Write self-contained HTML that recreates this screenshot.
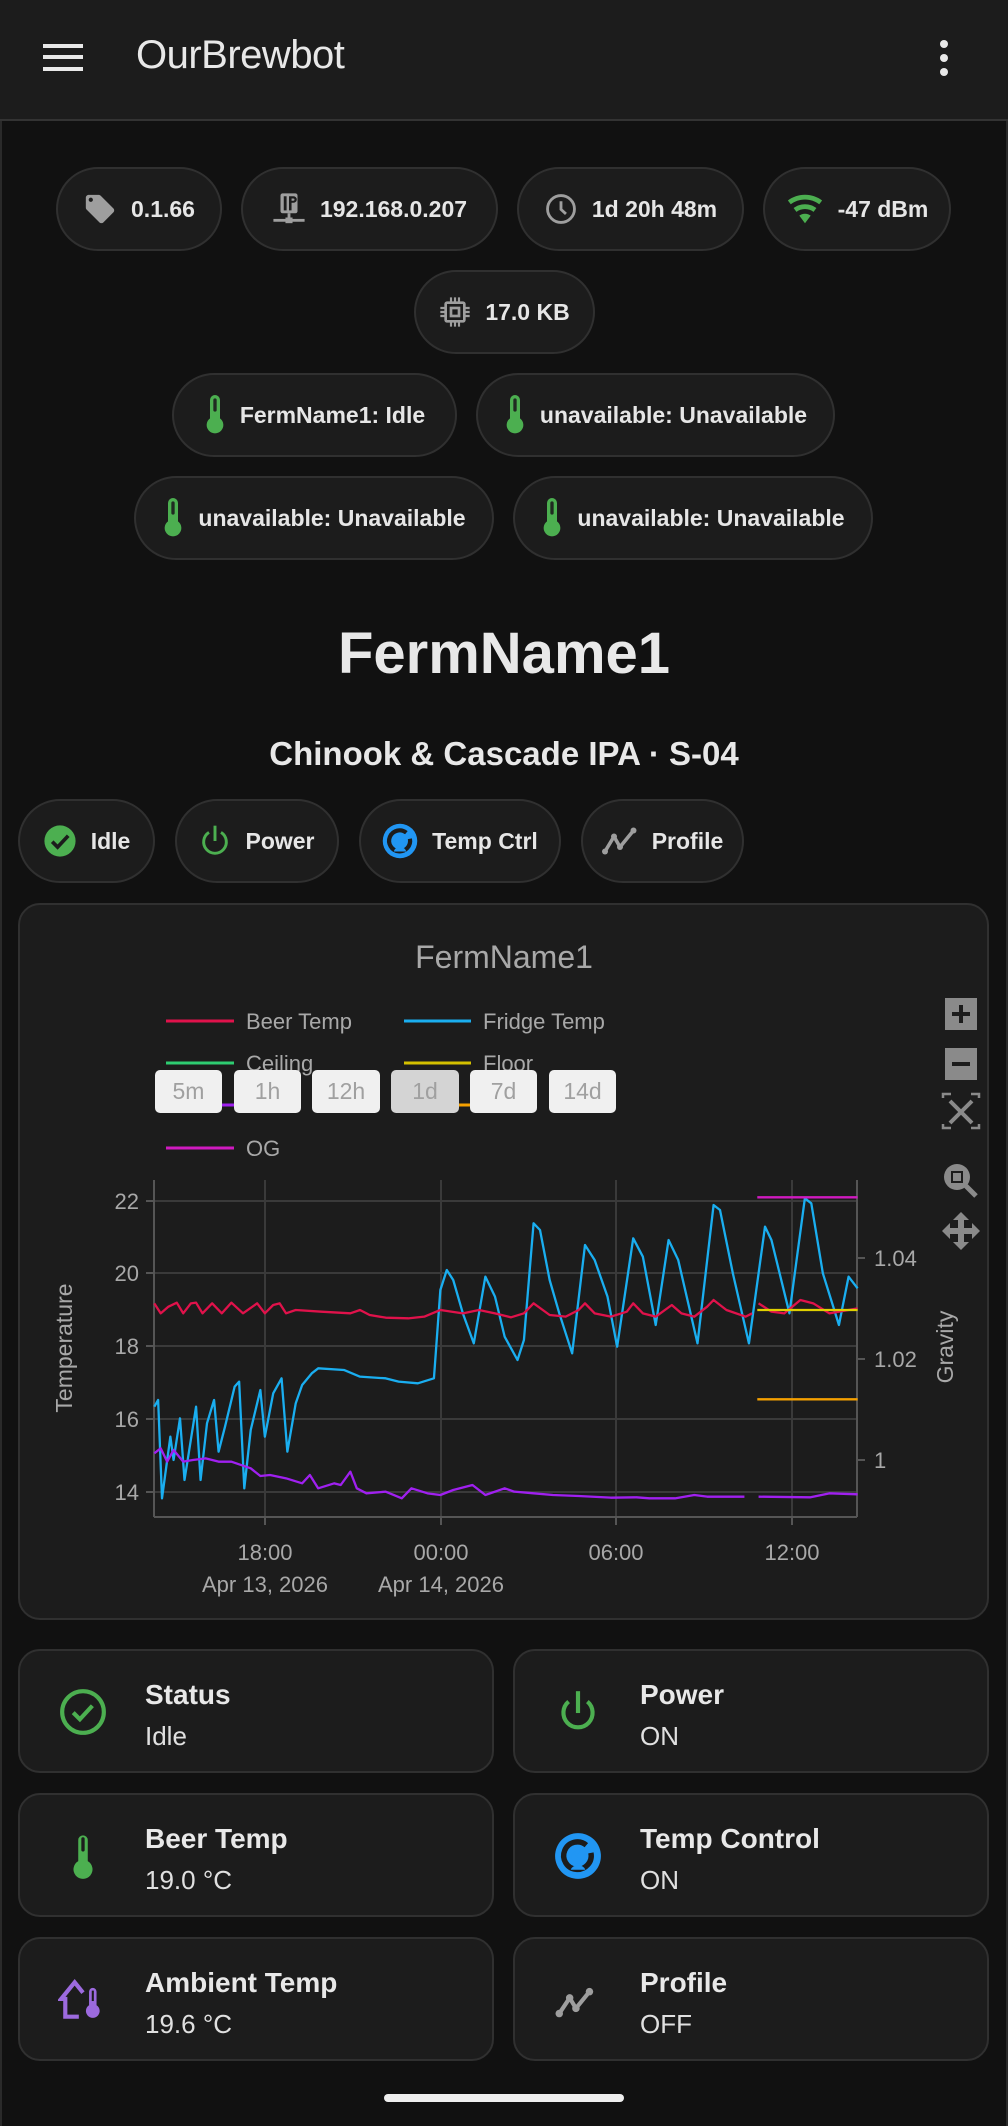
<!DOCTYPE html>
<html><head><meta charset="utf-8">
<style>
*{margin:0;padding:0;box-sizing:border-box}
html,body{width:1008px;height:2126px;background:#111111;overflow:hidden;font-family:"Liberation Sans",sans-serif;color:#e8e8e8}
.abs{position:absolute}
.hdr{left:0;top:0;width:1008px;height:121px;background:#1c1c1c;border-bottom:2px solid #333}
.chip{position:absolute;height:84px;border:2px solid #303030;background:#1c1c1c;border-radius:42px;display:flex;align-items:center;justify-content:center;gap:14px;font-weight:bold;font-size:23px;color:#e6e6e6;white-space:nowrap}
.chip svg{flex:none}
.card{position:absolute;border:2px solid #303030;background:#1c1c1c;border-radius:22px}
.tile .t{position:absolute;left:125px;top:28px;font-size:28px;font-weight:bold;color:#e8e8e8;white-space:nowrap}
.tile .v{position:absolute;left:125px;top:70px;font-size:26px;color:#e0e0e0}
.tile svg{position:absolute;left:38px;top:36px}
.rb{position:absolute;top:1070px;height:43px;background:#f0f0f0;border-radius:5px;color:#a0a0a0;font-size:23px;display:flex;align-items:center;justify-content:center}
</style></head><body>
<div class="abs" style="left:0;top:0;width:2px;height:2126px;background:#2a2a2a"></div>
<div class="abs" style="right:0;top:0;width:2px;height:2126px;background:#2a2a2a"></div>
<div class="abs hdr">
  <div class="abs" style="left:43px;top:44px;width:40px;height:4px;background:#e8e8e8"></div>
  <div class="abs" style="left:43px;top:55px;width:40px;height:4px;background:#e8e8e8"></div>
  <div class="abs" style="left:43px;top:67px;width:40px;height:4px;background:#e8e8e8"></div>
  <div class="abs" style="left:136px;top:33px;font-size:40px;color:#e8e8e8;letter-spacing:-0.5px">OurBrewbot</div>
  <div class="abs" style="left:940px;top:40px;width:8px;height:8px;border-radius:4px;background:#e8e8e8"></div>
  <div class="abs" style="left:940px;top:54px;width:8px;height:8px;border-radius:4px;background:#e8e8e8"></div>
  <div class="abs" style="left:940px;top:68px;width:8px;height:8px;border-radius:4px;background:#e8e8e8"></div>
</div>

<!-- chips row 1 -->
<div class="chip" style="left:56px;top:167px;width:166px">
<svg width="34" height="34" viewBox="0 0 24 24"><path fill="#9e9e9e" d="M5.5,7A1.5,1.5 0 0,1 4,5.5A1.5,1.5 0 0,1 5.5,4A1.5,1.5 0 0,1 7,5.5A1.5,1.5 0 0,1 5.5,7M21.41,11.58L12.41,2.58C12.05,2.22 11.55,2 11,2H4C2.89,2 2,2.89 2,4V11C2,11.550 2.22,12.05 2.59,12.41L11.58,21.41C11.95,21.77 12.45,22 13,22C13.55,22 14.05,21.77 14.41,21.41L21.41,14.41C21.78,14.05 22,13.55 22,13C22,12.44 21.77,11.94 21.41,11.58Z"/></svg>0.1.66</div>
<div class="chip" style="left:241px;top:167px;width:257px">
<svg width="34" height="34" viewBox="0 0 24 24"><rect x="6" y="1" width="12" height="14" rx="1.5" fill="#9e9e9e"/><rect x="8.3" y="3" width="2" height="10" fill="#1c1c1c"/><path d="M12 3h3.2a2.2 2.2 0 0 1 0 4.6H13.8V13H12Z M13.8 4.6v1.6h1.3a0.8 0.8 0 0 0 0-1.6Z" fill="#1c1c1c" fill-rule="evenodd"/><rect x="11" y="15" width="2" height="4" fill="#9e9e9e"/><rect x="1" y="19" width="22" height="2" fill="#9e9e9e"/><rect x="9.5" y="18" width="5" height="4" fill="#9e9e9e"/></svg>192.168.0.207</div>
<div class="chip" style="left:517px;top:167px;width:227px">
<svg width="34" height="34" viewBox="0 0 24 24"><circle cx="12" cy="12" r="9.5" fill="none" stroke="#9e9e9e" stroke-width="2"/><path d="M12 6.5V12.3L15.5 15.5" fill="none" stroke="#9e9e9e" stroke-width="2"/></svg>1d 20h 48m</div>
<div class="chip" style="left:763px;top:167px;width:188px">
<svg width="38" height="38" viewBox="0 0 24 24"><path fill="#4caf50" d="M12,21L15.6,16.2C14.6,15.45 13.35,15 12,15C10.65,15 9.4,15.45 8.4,16.2L12,21M12,3C7.95,3 4.21,4.34 1.2,6.6L3,9C5.5,7.12 8.62,6 12,6C15.38,6 18.5,7.12 21,9L22.8,6.6C19.79,4.34 16.05,3 12,3M12,9C9.3,9 6.81,9.89 4.8,11.4L6.6,13.8C8.1,12.67 9.97,12 12,12C14.03,12 15.9,12.67 17.4,13.8L19.2,11.4C17.19,9.890 14.7,9 12,9Z"/></svg>-47 dBm</div>
<div class="chip" style="left:414px;top:270px;width:181px">
<svg width="32" height="32" viewBox="0 0 24 24"><rect x="5" y="5" width="14" height="14" rx="1" fill="none" stroke="#9e9e9e" stroke-width="2"/><rect x="9" y="9" width="6" height="6" fill="none" stroke="#9e9e9e" stroke-width="2"/><path d="M9 1v4M12 1v4M15 1v4M9 19v4M12 19v4M15 19v4M1 9h4M1 12h4M1 15h4M19 9h4M19 12h4M19 15h4" stroke="#9e9e9e" stroke-width="1.6"/></svg>17.0 KB</div>

<!-- thermo chips -->
<div class="chip" style="left:172px;top:373px;width:285px"><svg width="22" height="40" viewBox="0 0 12 24"><path fill="#4caf50" d="M9 14V3a3 3 0 0 0-6 0v11a5 5 0 1 0 6 0Z"/><rect x="5" y="2" width="2" height="8" rx="1" fill="#1c1c1c" opacity="0.9"/></svg>FermName1: Idle</div>
<div class="chip" style="left:476px;top:373px;width:359px"><svg width="22" height="40" viewBox="0 0 12 24"><path fill="#4caf50" d="M9 14V3a3 3 0 0 0-6 0v11a5 5 0 1 0 6 0Z"/><rect x="5" y="2" width="2" height="8" rx="1" fill="#1c1c1c" opacity="0.9"/></svg>unavailable: Unavailable</div>
<div class="chip" style="left:134px;top:476px;width:360px"><svg width="22" height="40" viewBox="0 0 12 24"><path fill="#4caf50" d="M9 14V3a3 3 0 0 0-6 0v11a5 5 0 1 0 6 0Z"/><rect x="5" y="2" width="2" height="8" rx="1" fill="#1c1c1c" opacity="0.9"/></svg>unavailable: Unavailable</div>
<div class="chip" style="left:513px;top:476px;width:360px"><svg width="22" height="40" viewBox="0 0 12 24"><path fill="#4caf50" d="M9 14V3a3 3 0 0 0-6 0v11a5 5 0 1 0 6 0Z"/><rect x="5" y="2" width="2" height="8" rx="1" fill="#1c1c1c" opacity="0.9"/></svg>unavailable: Unavailable</div>

<div class="abs" style="left:0;width:1008px;top:620px;text-align:center;font-size:58px;font-weight:bold;color:#e8e8e8">FermName1</div>
<div class="abs" style="left:0;width:1008px;top:735px;text-align:center;font-size:33px;font-weight:bold;color:#e8e8e8">Chinook &amp; Cascade IPA · S-04</div>

<!-- action buttons -->
<div class="chip" style="left:18px;top:799px;width:137px;height:84px;font-size:23px"><svg width="34" height="34" viewBox="0 0 24 24"><circle cx="12" cy="12" r="11" fill="#4caf50"/><path d="M6.5 12.5l3.8 3.8 7.5-8" fill="none" stroke="#1c1c1c" stroke-width="2.6"/></svg>Idle</div>
<div class="chip" style="left:175px;top:799px;width:164px;height:84px"><svg width="32" height="36" viewBox="0 0 24 26"><path d="M7.5 6.5A8.5 8.5 0 1 0 16.5 6.5" fill="none" stroke="#4caf50" stroke-width="2.2"/><path d="M12 1.5V13" stroke="#4caf50" stroke-width="2.2"/></svg>Power</div>
<div class="chip" style="left:359px;top:799px;width:202px;height:84px"><svg width="36" height="36" viewBox="0 0 24 24"><circle cx="12" cy="12" r="11.5" fill="#2196f3"/><path d="M16.2 6.5A7 7 0 1 0 18.6 10.5" fill="none" stroke="#1c1c1c" stroke-width="2.8"/><circle cx="12" cy="12.5" r="3.2" fill="#2196f3"/><path d="M12 13L16 8" stroke="#2196f3" stroke-width="2.5"/><path d="M8 19a4 3 0 0 1 8 0" fill="#2196f3"/></svg>Temp Ctrl</div>
<div class="chip" style="left:581px;top:799px;width:163px;height:84px"><svg width="36" height="30" viewBox="0 0 24 20"><path d="M2 17L8 7L12 14L21 3" fill="none" stroke="#9e9e9e" stroke-width="2.4" stroke-linejoin="round"/><circle cx="2" cy="17" r="2" fill="#9e9e9e"/><circle cx="8" cy="7" r="2" fill="#9e9e9e"/><circle cx="12" cy="14" r="2" fill="#9e9e9e"/><circle cx="21" cy="3" r="2" fill="#9e9e9e"/></svg>Profile</div>

<!-- chart card -->
<div class="card" style="left:18px;top:903px;width:971px;height:717px"></div>
<svg class="abs" style="left:0;top:0" width="1008" height="2126" viewBox="0 0 1008 2126">
 <text x="504" y="968" text-anchor="middle" font-family="Liberation Sans" font-size="32" fill="#a8a8a8">FermName1</text>
 <g font-family="Liberation Sans" font-size="22" fill="#a8a8a8">
  <line x1="166" y1="1021" x2="234" y2="1021" stroke="#e0124b" stroke-width="3"/><text x="246" y="1029">Beer Temp</text>
  <line x1="404" y1="1021" x2="471" y2="1021" stroke="#1aaef0" stroke-width="3"/><text x="483" y="1029">Fridge Temp</text>
  <line x1="166" y1="1063" x2="234" y2="1063" stroke="#2ecc71" stroke-width="3"/><text x="246" y="1071">Ceiling</text>
  <line x1="404" y1="1063" x2="471" y2="1063" stroke="#d4c000" stroke-width="3"/><text x="483" y="1071">Floor</text>
  <line x1="166" y1="1105" x2="234" y2="1105" stroke="#a020f0" stroke-width="3"/><text x="246" y="1113">SG</text>
  <line x1="404" y1="1105" x2="471" y2="1105" stroke="#f5a000" stroke-width="3"/><text x="483" y="1113">FG</text>
  <line x1="166" y1="1148" x2="234" y2="1148" stroke="#d01ac0" stroke-width="3"/><text x="246" y="1156">OG</text>
 </g>
 <g stroke="#3a3a3a" stroke-width="2">
  <line x1="154" y1="1201" x2="857" y2="1201"/><line x1="154" y1="1273" x2="857" y2="1273"/>
  <line x1="154" y1="1346" x2="857" y2="1346"/><line x1="154" y1="1419" x2="857" y2="1419"/>
  <line x1="154" y1="1492" x2="857" y2="1492"/>
  <line x1="265" y1="1180" x2="265" y2="1517"/><line x1="441" y1="1180" x2="441" y2="1517"/>
  <line x1="616" y1="1180" x2="616" y2="1517"/><line x1="792" y1="1180" x2="792" y2="1517"/>
 </g>
 <g stroke="#555" stroke-width="2">
  <line x1="154" y1="1180" x2="154" y2="1517"/><line x1="857" y1="1180" x2="857" y2="1517"/>
  <line x1="154" y1="1517" x2="857" y2="1517"/>
  <line x1="265" y1="1517" x2="265" y2="1525"/><line x1="441" y1="1517" x2="441" y2="1525"/><line x1="616" y1="1517" x2="616" y2="1525"/><line x1="792" y1="1517" x2="792" y2="1525"/>
  <line x1="146" y1="1201" x2="154" y2="1201"/><line x1="146" y1="1273" x2="154" y2="1273"/><line x1="146" y1="1346" x2="154" y2="1346"/><line x1="146" y1="1419" x2="154" y2="1419"/><line x1="146" y1="1492" x2="154" y2="1492"/>
  <line x1="857" y1="1258" x2="865" y2="1258"/><line x1="857" y1="1359" x2="865" y2="1359"/><line x1="857" y1="1460" x2="865" y2="1460"/>
 </g>
 <g font-family="Liberation Sans" font-size="22" fill="#a8a8a8">
  <text x="139" y="1209" text-anchor="end">22</text><text x="139" y="1281" text-anchor="end">20</text>
  <text x="139" y="1354" text-anchor="end">18</text><text x="139" y="1427" text-anchor="end">16</text>
  <text x="139" y="1500" text-anchor="end">14</text>
  <text x="874" y="1266">1.04</text><text x="874" y="1367">1.02</text><text x="874" y="1468">1</text>
  <text x="265" y="1560" text-anchor="middle">18:00</text><text x="441" y="1560" text-anchor="middle">00:00</text>
  <text x="616" y="1560" text-anchor="middle">06:00</text><text x="792" y="1560" text-anchor="middle">12:00</text>
  <text x="265" y="1592" text-anchor="middle">Apr 13, 2026</text><text x="441" y="1592" text-anchor="middle">Apr 14, 2026</text>
  <text transform="translate(72,1348) rotate(-90)" text-anchor="middle" font-size="23">Temperature</text>
  <text transform="translate(953,1347) rotate(-90)" text-anchor="middle" font-size="23">Gravity</text>
 </g>
 <g transform="matrix(0.64286,0,0,0.33333,0,1140)" fill="none" stroke-width="2.3" stroke-linejoin="round">
  <polyline vector-effect="non-scaling-stroke" stroke="#1aaef0" points="240,800 246,780 252,1075 265,890 270,960 280,835 287,1020 305,800 312,1020 322,850 333,780 340,935 350,860 365,740 372,725 380,1045 390,870 405,750 412,890 425,760 438,715 447,935 460,790 470,735 485,700 495,685 535,690 560,710 600,715 620,725 650,730 675,715 685,450 695,390 705,420 720,520 737,610 755,410 770,470 785,590 805,660 815,600 830,250 840,270 855,420 870,520 890,640 910,315 925,360 945,470 960,620 985,295 1000,350 1020,555 1040,300 1055,360 1085,610 1110,195 1120,210 1140,400 1165,610 1190,260 1200,300 1228,520 1252,175 1262,190 1280,400 1305,555 1320,410 1334,445"/>
  <polyline vector-effect="non-scaling-stroke" stroke="#e0124b" points="240,490 250,520 262,500 275,488 285,520 297,490 305,488 315,520 330,490 345,520 360,488 378,520 400,490 412,520 425,495 435,490 445,520 460,510 500,515 545,520 560,510 575,525 600,533 635,535 660,530 685,510 720,520 745,510 770,520 795,532 815,520 830,490 855,525 880,530 900,510 910,490 925,520 950,530 975,515 985,490 1000,520 1020,530 1045,495 1060,520 1080,530 1100,500 1110,480 1130,510 1160,530 1170,520"/>
  <polyline vector-effect="non-scaling-stroke" stroke="#e0124b" points="1180,490 1200,515 1220,520 1245,480 1265,490 1290,520 1334,505"/>
  <polyline vector-effect="non-scaling-stroke" stroke="#a020f0" points="240,940 250,925 260,965 270,930 285,965 300,960 320,955 340,965 360,965 390,985 405,1008 420,1005 445,1015 470,1030 482,1005 495,1045 520,1030 530,1035 545,995 555,1045 570,1060 600,1055 625,1075 640,1045 665,1060 685,1065 705,1050 735,1035 755,1065 785,1045 800,1055 830,1060 860,1065 900,1068 950,1073 990,1072 1010,1075 1050,1075 1080,1065 1100,1070 1158,1070"/>
  <polyline vector-effect="non-scaling-stroke" stroke="#a020f0" points="1180,1070 1260,1072 1290,1060 1334,1063"/>
  <line vector-effect="non-scaling-stroke" x1="1178" y1="172" x2="1334" y2="172" stroke="#d01ac0"/>
  <line vector-effect="non-scaling-stroke" x1="1178" y1="510" x2="1334" y2="510" stroke="#e0d000"/>
  <line vector-effect="non-scaling-stroke" x1="1178" y1="778" x2="1334" y2="778" stroke="#f5a000"/>
 </g>
 <g fill="#8a8a8a">
  <rect x="945" y="998" width="32" height="32"/><rect x="952" y="1012" width="18" height="4" fill="#1c1c1c"/><rect x="959" y="1005" width="4" height="18" fill="#1c1c1c"/>
  <rect x="945" y="1048" width="32" height="32"/><rect x="952" y="1062" width="18" height="4" fill="#1c1c1c"/>
  <path d="M943 1098v-4h8M971 1094h8v4M979 1124v4h-8M951 1128h-8v-4" fill="none" stroke="#8a8a8a" stroke-width="2.5"/>
  <path d="M950 1101l22 22M972 1101l-22 22" stroke="#8a8a8a" stroke-width="4"/>
  <circle cx="957" cy="1177" r="13"/><rect x="951" y="1171" width="12" height="12" fill="#1c1c1c"/><rect x="953" y="1173" width="8" height="8"/><path d="M966 1186l10 10" stroke="#8a8a8a" stroke-width="5"/>
  <path d="M961 1212l8 8h-5v8h8v-5l8 8-8 8v-5h-8v8h5l-8 8-8-8h5v-8h-8v5l-8-8 8-8v5h8v-8h-5z"/>
 </g>
</svg>
<div class="rb" style="left:155px;width:67px">5m</div>
<div class="rb" style="left:234px;width:67px">1h</div>
<div class="rb" style="left:312px;width:68px">12h</div>
<div class="rb" style="left:391px;width:68px;background:#d4d4d4">1d</div>
<div class="rb" style="left:470px;width:67px">7d</div>
<div class="rb" style="left:549px;width:67px">14d</div>

<!-- tiles -->
<div class="card tile" style="left:18px;top:1649px;width:476px;height:124px">
 <svg width="50" height="50" viewBox="0 0 24 24"><circle cx="12" cy="12" r="10" fill="none" stroke="#4caf50" stroke-width="2"/><path d="M7.3 12.3l3.2 3.2 6-6.5" fill="none" stroke="#4caf50" stroke-width="2"/></svg>
 <div class="t">Status</div><div class="v">Idle</div></div>
<div class="card tile" style="left:513px;top:1649px;width:476px;height:124px">
 <svg width="50" height="50" viewBox="0 0 24 24"><path d="M7.5 7A7 7 0 1 0 16.5 7" fill="none" stroke="#4caf50" stroke-width="2"/><path d="M12 2V12.5" stroke="#4caf50" stroke-width="2"/></svg>
 <div class="t">Power</div><div class="v">ON</div></div>
<div class="card tile" style="left:18px;top:1793px;width:476px;height:124px">
 <svg width="50" height="50" viewBox="5 2 14 21" style="top:38px"><path fill="#4caf50" d="M14 13.8V5a2 2 0 0 0-4 0v8.8a4 4 0 1 0 4 0Z"/><rect x="11.3" y="3.8" width="1.4" height="6" rx="0.7" fill="#1c1c1c"/></svg>
 <div class="t">Beer Temp</div><div class="v">19.0 °C</div></div>
<div class="card tile" style="left:513px;top:1793px;width:476px;height:124px">
 <svg width="50" height="50" viewBox="0 0 24 24"><circle cx="12" cy="12" r="11" fill="#2196f3"/><path d="M16 6.8A6.6 6.6 0 1 0 18.2 10.5" fill="none" stroke="#1c1c1c" stroke-width="2.6"/><circle cx="12" cy="12.5" r="3" fill="#2196f3"/><path d="M12 13L15.6 8.3" stroke="#2196f3" stroke-width="2.3"/><path d="M8.5 18.6a3.6 2.8 0 0 1 7 0" fill="#2196f3"/></svg>
 <div class="t">Temp Control</div><div class="v">ON</div></div>
<div class="card tile" style="left:18px;top:1937px;width:476px;height:124px">
 <svg width="50" height="50" viewBox="0 0 24 24"><path d="M10 20H3.5V11.5H1.5L8 3.5L12 8.5" fill="none" stroke="#9c6ade" stroke-width="2"/><path fill="#9c6ade" d="M18.5 14.5V8a1.8 1.8 0 0 0-3.6 0v6.5a3.3 3.3 0 1 0 3.6 0Z"/><rect x="16.2" y="7.5" width="1" height="5" fill="#1c1c1c"/></svg>
 <div class="t">Ambient Temp</div><div class="v">19.6 °C</div></div>
<div class="card tile" style="left:513px;top:1937px;width:476px;height:124px">
 <svg width="50" height="50" viewBox="0 0 24 24"><path d="M3 18.5L8 11L11 16L17.5 8" fill="none" stroke="#9e9e9e" stroke-width="2" stroke-linejoin="round"/><circle cx="3" cy="18.5" r="1.8" fill="#9e9e9e"/><circle cx="8" cy="11" r="1.8" fill="#9e9e9e"/><circle cx="11" cy="16" r="1.8" fill="#9e9e9e"/><circle cx="17.5" cy="8" r="1.8" fill="#9e9e9e"/></svg>
 <div class="t">Profile</div><div class="v">OFF</div></div>

<div class="abs" style="left:384px;top:2094px;width:240px;height:8px;border-radius:4px;background:#eeeeee"></div>
</body></html>
